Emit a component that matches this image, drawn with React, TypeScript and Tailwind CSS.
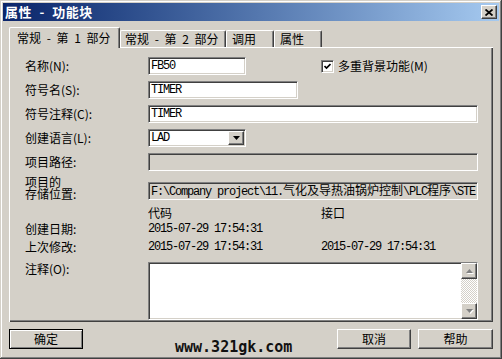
import React from 'react';

const sunken =
  'border border-t-[#808080] border-l-[#808080] border-b-white border-r-white shadow-[inset_1px_1px_0_#404040,inset_-1px_-1px_0_#d4d0c8]';
const raised =
  'border border-t-white border-l-white border-b-[#404040] border-r-[#404040] shadow-[inset_-1px_-1px_0_#808080,inset_1px_1px_0_#d4d0c8]';
const mono = "font-['Liberation_Mono',monospace] text-[12px] tracking-[-1.2px]";
const cjk = "font-['Noto_Sans_CJK_SC',sans-serif] tracking-normal";
const tab =
  'h-[17px] border-t border-l border-r border-t-white border-l-white border-r-[#404040] shadow-[inset_-1px_0_0_#808080] rounded-t-[2px] flex items-center leading-[12px] whitespace-pre [word-spacing:3px]';

function Label({ children }: { children: React.ReactNode }) {
  return <div className="w-[123px] shrink-0 leading-[12px]">{children}</div>;
}

function Field({ width, value, disabled }: { width: string; value?: React.ReactNode; disabled?: boolean }) {
  return (
    <div
      className={`${sunken} ${width} h-[18px] flex items-center pl-[2px] overflow-hidden whitespace-nowrap ${
        disabled ? 'bg-[#d4d0c8]' : 'bg-white'
      }`}
    >
      <span className={mono}>{value}</span>
    </div>
  );
}

function Arrow({ down, disabled }: { down?: boolean; disabled?: boolean }) {
  return (
    <svg width="7" height="4" viewBox="0 0 7 4" className={disabled ? 'drop-shadow-[1px_1px_0_#fff]' : ''}>
      <polygon
        points={down ? '0,0 7,0 3.5,4' : '0,4 7,4 3.5,0'}
        fill={disabled ? '#808080' : '#000'}
      />
    </svg>
  );
}

export default function App() {
  return (
    <div className="w-[502px] h-[359px] bg-[#d4d0c8] p-[3px] flex flex-col text-[12px] text-black font-['Noto_Sans_CJK_SC',sans-serif] shadow-[inset_-1px_-1px_0_#404040,inset_1px_1px_0_#d4d0c8,inset_-2px_-2px_0_#808080,inset_2px_2px_0_#fff]">
      {/* title bar */}
      <div className="h-[18px] flex items-center bg-linear-to-r from-[#0a246a] to-[#a6caf0] pl-[2px] pr-[2px]">
        <span className="text-white font-bold text-[13px] leading-[12px] tracking-[0.5px] whitespace-pre [word-spacing:4px]">
          属性 - 功能块
        </span>
        <button className={`${raised} ml-auto w-[16px] h-[14px] bg-[#d4d0c8] flex items-center justify-center`}>
          <svg width="8" height="7" viewBox="0 0 8 7">
            <path d="M0.5 0.5 L7.5 6.5 M7.5 0.5 L0.5 6.5" stroke="#000" strokeWidth="1.8" />
          </svg>
        </button>
      </div>

      <div className="flex flex-col px-[6px]">
        {/* tabs */}
        <div className="mt-[6px] h-[20px] flex items-end">
          <div className={`${tab} relative z-10 -mb-[1px] h-[21px] w-[111px] bg-[#d4d0c8] pl-[7px]`}>
            常规 - 第 1 部分
          </div>
          <div className={`${tab} w-[106px] pl-[4px]`}>常规 - 第 2 部分</div>
          <div className={`${tab} w-[48px] pl-[5px]`}>调用</div>
          <div className={`${tab} w-[48px] pl-[5px]`}>属性</div>
        </div>

        {/* panel */}
        <div className="h-[275px] w-[484px] flex flex-col pl-[16px] pt-[10px] shadow-[inset_1px_1px_0_#fff,inset_-1px_-1px_0_#404040,inset_-2px_-2px_0_#808080]">
          <div className="flex items-center h-[18px]">
            <Label>名称(N):</Label>
            <Field width="w-[98px]" value="FB50" />
            <div className={`${sunken} ml-[75px] w-[13px] h-[13px] bg-white flex items-center justify-center`}>
              <svg width="7" height="7" viewBox="0 0 7 7">
                <polyline points="0.5,3 2.5,5 6.5,1" fill="none" stroke="#000" strokeWidth="1.7" />
              </svg>
            </div>
            <span className="ml-[4px] leading-[12px]">多重背景功能(M)</span>
          </div>

          <div className="flex items-center h-[18px] mt-[6px]">
            <Label>符号名(S):</Label>
            <Field width="w-[150px]" value="TIMER" />
          </div>

          <div className="flex items-center h-[18px] mt-[6px]">
            <Label>符号注释(C):</Label>
            <Field width="w-[330px]" value="TIMER" />
          </div>

          <div className="flex items-center h-[18px] mt-[6px]">
            <Label>创建语言(L):</Label>
            <div className={`${sunken} w-[98px] h-[18px] bg-white flex items-center pl-[2px] pr-[1px]`}>
              <span className={mono}>LAD</span>
              <div className={`${raised} ml-auto w-[16px] h-[14px] bg-[#d4d0c8] flex items-center justify-center`}>
                <Arrow down />
              </div>
            </div>
          </div>

          <div className="flex items-center h-[18px] mt-[6px]">
            <Label>项目路径:</Label>
            <Field width="w-[330px]" disabled />
          </div>

          <div className="flex items-end mt-[5px]">
            <div className="w-[123px] shrink-0 leading-[12px]">
              <div>项目的</div>
              <div>存储位置:</div>
            </div>
            <Field
              width="w-[330px]"
              disabled
              value={
                <>
                  F:\Company project\11.<span className={cjk}>气化及导热油锅炉控制</span>\PLC
                  <span className={cjk}>程序</span>\STE
                </>
              }
            />
          </div>

          <div className="flex items-center h-[12px] mt-[7px] leading-[12px]">
            <div className="w-[123px]" />
            <div className="w-[173px]">代码</div>
            <div>接口</div>
          </div>

          <div className="flex items-center h-[12px] mt-[4px] leading-[12px]">
            <Label>创建日期:</Label>
            <div className={`w-[173px] ${mono}`}>2015-07-29 17:54:31</div>
          </div>

          <div className="flex items-center h-[12px] mt-[6px] leading-[12px]">
            <Label>上次修改:</Label>
            <div className={`w-[173px] ${mono}`}>2015-07-29 17:54:31</div>
            <div className={mono}>2015-07-29 17:54:31</div>
          </div>

          <div className="flex items-start mt-[9px]">
            <Label>
              <div className="pt-[1px]">注释(O):</div>
            </Label>
            <div className={`${sunken} w-[330px] h-[58px] bg-white flex justify-end`}>
              <div className="w-[16px] flex flex-col">
                <div className={`${raised} h-[16px] bg-[#d4d0c8] flex items-center justify-center`}>
                  <Arrow disabled />
                </div>
                <div className="flex-1 bg-[repeating-conic-gradient(#ffffff_0_25%,#d4d0c8_0_50%)] bg-[length:2px_2px]" />
                <div className={`${raised} h-[16px] bg-[#d4d0c8] flex items-center justify-center`}>
                  <Arrow down disabled />
                </div>
              </div>
            </div>
          </div>
        </div>

        {/* buttons */}
        <div className="mt-[7px] h-[20px] flex items-start">
          <button className="w-[74px] h-[20px] border border-black bg-[#d4d0c8] shadow-[inset_1px_1px_0_#fff,inset_-1px_-1px_0_#808080] leading-[12px]">
            确定
          </button>
          <div className="ml-[92px] mt-[12px] font-['DejaVu_Sans_Mono',monospace] font-bold text-[15px] leading-[12px] text-[#111]">
            www.321gk.com
          </div>
          <button className={`${raised} ml-auto w-[74px] h-[20px] bg-[#d4d0c8] leading-[12px]`}>取消</button>
          <button className={`${raised} ml-[7px] w-[75px] h-[20px] bg-[#d4d0c8] leading-[12px]`}>帮助</button>
        </div>
      </div>
    </div>
  );
}
